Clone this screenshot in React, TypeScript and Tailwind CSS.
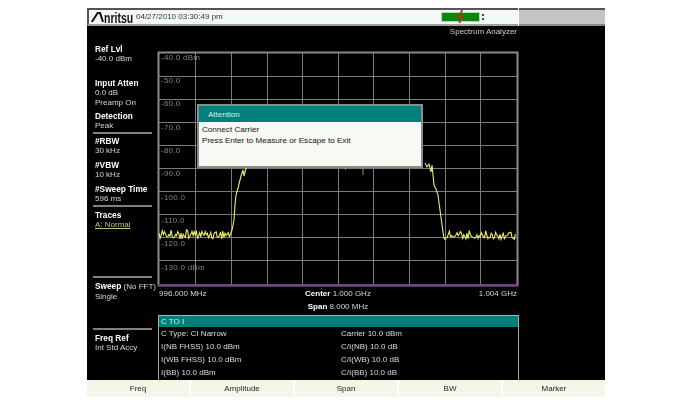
const font = { fontFamily: '"Liberation Sans", Arial, sans-serif' };

const levels = [
  { y: 57, label: '-40.0 dBm' },
  { y: 80, label: '-50.0' },
  { y: 103, label: '-60.0' },
  { y: 127, label: '-70.0' },
  { y: 150, label: '-80.0' },
  { y: 173, label: '-90.0' },
  { y: 197, label: '-100.0' },
  { y: 220, label: '-110.0' },
  { y: 243, label: '-120.0' },
  { y: 267, label: '-130.0 dBm' },
];
const vLines = [195, 231, 267, 302, 338, 373, 409, 445, 480];
const hLines = [76, 99, 122, 145, 168, 191, 214, 237, 260];

// same noise every render
function noise(i: number) {
  const v = Math.sin(i * 12.9898) * 43758.5453;
  return v - Math.floor(v) - 0.5;
}

function noiseLine(from: number, to: number, base: number) {
  const pts: string[] = [];
  let i = 0;
  for (let x = from; x <= to; x += 1.1) {
    pts.push(`${x.toFixed(1)},${(base + noise(i + from) * 9).toFixed(1)}`);
    i++;
  }
  return pts;
}

const leftTrace = [
  ...noiseLine(159, 231, 234.5),
  '232,230', '234,220', '235,205', '236,195', '238,188', '240,180', '241,176', '243,170', '244,176', '246,168',
].join(' ');
const rightTrace = [
  '425,163', '427,167', '429,164', '431,172', '432,165', '434,185', '436,189', '438,195', '440,210', '442,225', '443,232', '444,238',
  ...noiseLine(445, 516, 235),
].join(' ');

function Label({ title, children }: { title: string; children?: React.ReactNode }) {
  return (
    <div className="pl-[2px] leading-[10px] text-[8px] text-[#d8d8d8]">
      <div className="font-bold text-[8.3px] text-white">{title}</div>
      {children}
    </div>
  );
}

function Rule() {
  return <div className="h-[2px] w-[59px] bg-[#808080]" />;
}

function SideBar() {
  return (
    <div className="w-[70px] pl-[6px] pt-[18px] whitespace-nowrap">
      <Label title="Ref Lvl">
        <div>-40.0 dBm</div>
      </Label>
      <div className="mt-[14px]">
        <Label title="Input Atten">
          <div>0.0 dB</div>
          <div>Preamp On</div>
        </Label>
      </div>
      <div className="mt-[3px]">
        <Label title="Detection">
          <div>Peak</div>
        </Label>
      </div>
      <div className="mt-[1px]"><Rule /></div>
      <div className="mt-[2px]">
        <Label title="#RBW">
          <div>30 kHz</div>
        </Label>
      </div>
      <div className="mt-[4px]">
        <Label title="#VBW">
          <div>10 kHz</div>
        </Label>
      </div>
      <div className="mt-[4px]">
        <Label title="#Sweep Time">
          <div>596 ms</div>
        </Label>
      </div>
      <div className="mt-[1px]"><Rule /></div>
      <div className="mt-[3px]">
        <Label title="Traces">
          <div className="text-[#c4c47a] underline">A: Normal</div>
        </Label>
      </div>
      <div className="mt-[46px]"><Rule /></div>
      <div className="mt-[3px]">
        <div className="pl-[2px] leading-[10px] text-[8px] text-[#d8d8d8]">
          <div><span className="font-bold text-[8.3px] text-white">Sweep</span> (No FFT)</div>
          <div>Single</div>
        </div>
      </div>
      <div className="mt-[26px]"><Rule /></div>
      <div className="mt-[3px]">
        <Label title="Freq Ref">
          <div>Int Std Accy</div>
        </Label>
      </div>
    </div>
  );
}

function Chart() {
  return (
    <svg width="362" height="236" viewBox="157 51 362 236" className="block">
      <g stroke="#7c7c7c" strokeWidth="1">
        {vLines.map((x) => (
          <line key={x} x1={x + 0.5} x2={x + 0.5} y1="52" y2="285" />
        ))}
        {hLines.map((y) => (
          <line key={y} x1="159" x2="517" y1={y + 0.5} y2={y + 0.5} />
        ))}
      </g>
      <rect x="158.5" y="52.5" width="359" height="233" fill="none" stroke="#8a8a8a" strokeWidth="2" />
      <line x1="158" x2="518" y1="285" y2="285" stroke="#7a3f8c" strokeWidth="2" />
      {levels.map((l) => (
        <text key={l.label} x="161" y={l.y + 3} fontSize="8" fill="#858585" letterSpacing="0.25" style={font}>
          {l.label}
        </text>
      ))}
      <polyline points={leftTrace} fill="none" stroke="#ecec70" strokeWidth="1.1" />
      <polyline points={rightTrace} fill="none" stroke="#ecec70" strokeWidth="1.1" />
      <line x1="363" x2="363" y1="168" y2="175" stroke="#b8b878" strokeWidth="0.8" />
      <line x1="345.5" x2="345.5" y1="168" y2="170" stroke="#b8b878" strokeWidth="0.8" />
    </svg>
  );
}

function Dialog() {
  return (
    <div className="absolute left-[40px] top-[78px] w-[226px] h-[64px] border-2 border-[#8c8c8c] bg-[#f6f9f4]">
      <div className="h-[16px] bg-[#007f7c] pl-[9px] text-[8px] leading-[17px] text-[#d8f0ec]">Attention</div>
      <div className="pl-[3px] pt-[2px] text-[8.1px] leading-[11px] text-[#111]">
        <div>Connect Carrier</div>
        <div>Press Enter to Measure or Escape to Exit</div>
      </div>
    </div>
  );
}

const rows = [
  ['C Type: CI Narrow', 'Carrier 10.0 dBm'],
  ['I(NB FHSS) 10.0 dBm', 'C/I(NB) 10.0 dB'],
  ['I(WB FHSS) 10.0 dBm', 'C/I(WB) 10.0 dB'],
  ['I(BB) 10.0 dBm', 'C/I(BB) 10.0 dB'],
];

function Results() {
  return (
    <div className="ml-[1px] w-[361px] h-[65px] border-x border-[#a8a8a8] text-[8px] text-[#dcdcdc]">
      <div className="h-[12px] border-t border-[#8fc4c0] bg-[#007f7c] pl-[2px] leading-[11px] text-[#d4ecE8]">C TO I</div>
      {rows.map((r) => (
        <div key={r[0]} className="flex h-[13px] items-center pl-[2px]">
          <div className="w-[180px]">{r[0]}</div>
          <div>{r[1]}</div>
        </div>
      ))}
    </div>
  );
}

function Battery() {
  return (
    <div className="mr-[34px] flex items-center gap-[2px]">
      <div className="relative h-[10px] w-[39px] border border-[#b8d8b8] bg-[#0a860a]">
        <svg width="10" height="14" viewBox="0 0 10 14" className="absolute left-[14px] -top-[3px]">
          <path d="M6.5 0 L2.5 6 L6.5 7 L3 13" fill="none" stroke="#b5301c" strokeWidth="1.8" />
        </svg>
      </div>
      <div className="flex flex-col gap-[2px]">
        <div className="h-[2px] w-[2px] bg-[#444]" />
        <div className="h-[2px] w-[2px] bg-[#444]" />
      </div>
    </div>
  );
}

const softKeys = ['Freq', 'Amplitude', 'Span', 'BW', 'Marker'];

export default function App() {
  return (
    <div className="h-[406px] w-[689px] bg-white pl-[87px] pt-[8px]" style={font}>
      <div className="w-[518px] blur-[0.3px]">
        {/* Title bar */}
        <div className="flex h-[18px]">
          <div className="flex w-[431px] items-center justify-between border-2 border-r-0 border-[#555] border-b-[#a0a0a0] bg-[#f2faf3]">
            <div className="flex items-center pl-[2px]">
              <svg width="13" height="10" viewBox="0 0 13 10" className="shrink-0">
                <path d="M0.8 10 L6.8 0.8 L9 0.8 L12 10" fill="none" stroke="#111" strokeWidth="2" />
              </svg>
              <span className="w-[30px] origin-left scale-x-[0.7] text-[15px] font-bold leading-none text-[#111]">nritsu</span>
              <span className="ml-[2px] text-[8px] text-[#333]">04/27/2010 03:30:49 pm</span>
            </div>
            <Battery />
          </div>
          <div className="ml-[1px] flex-1 border-y-2 border-[#555] border-b-[#888] bg-[#c4c4c8]" />
        </div>
        {/* Body */}
        <div className="flex h-[354px] bg-black">
          <SideBar />
          <div className="relative w-[362px]">
            <div className="h-[25px] pr-[2px] pt-[1px] text-right text-[8px] leading-[9px] text-[#d0d0d0]">Spectrum Analyzer</div>
            <Chart />
            <Dialog />
            <div className="grid grid-cols-3 px-[2px] pt-[1px] text-[8px] leading-[11px] text-[#d4d4d4]">
              <span>996.000 MHz</span>
              <span className="text-center whitespace-nowrap">
                <span className="font-bold text-white">Center</span> 1.000 GHz
              </span>
              <span className="text-right">1.004 GHz</span>
            </div>
            <div className="mt-[2px] text-center text-[8px] leading-[11px] text-[#d4d4d4]">
              <span className="font-bold text-white">Span</span> 8.000 MHz
            </div>
            <div className="mt-[3px]">
              <Results />
            </div>
          </div>
        </div>
        {/* Soft keys */}
        <div className="flex h-[17px] gap-[2px]">
          {softKeys.map((k) => (
            <div key={k} className="flex flex-1 items-center justify-center bg-[#f4f6e8] text-[8px] text-[#222]">
              {k}
            </div>
          ))}
        </div>
      </div>
    </div>
  );
}
